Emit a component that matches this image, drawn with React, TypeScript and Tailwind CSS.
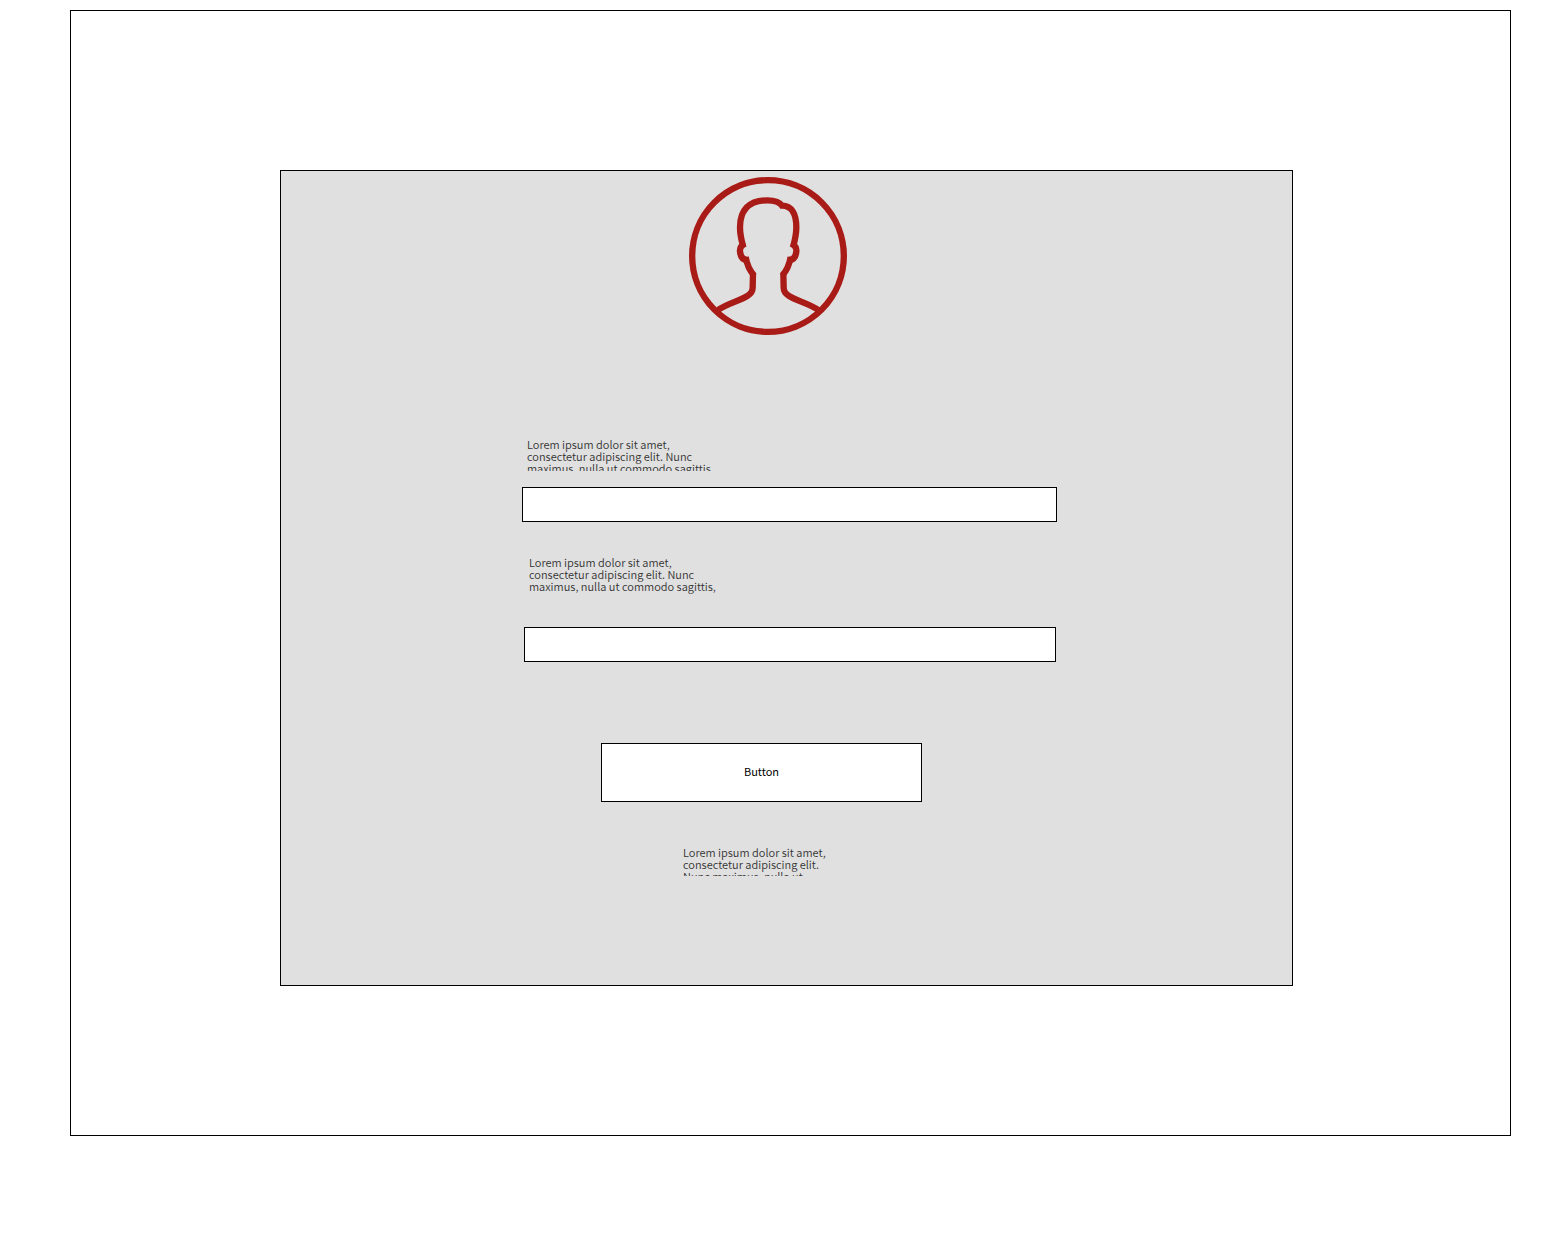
function Avatar() {
  return (
    <svg
      viewBox="27 36 474 474"
      className="size-[158px]"
      fill="none"
      stroke="#a91b16"
      strokeWidth={19}
      role="img"
      aria-label="User avatar"
    >
      <circle cx="264" cy="273" r="227.5" />
      <path d="M189 243C184 225 180 208 180 187C180 135 207 106 262 106C284 106 299 111 306 122C335 122 349 147 349 187C349 208 345 225 340 243" />
      <path d="M196 236C184 241 179 249 180 259C181 273 186 284 201 285" />
      <path d="M333 236C345 241 350 249 349 259C348 273 343 284 328 285" />
      <path d="M197 276C201 300 210 318 222 331" />
      <path d="M332 276C328 300 319 318 307 331" />
      <path d="M219 324L218 368C218 402 155 406 114 435" />
      <path d="M310 324L311 368C311 402 374 406 415 435" />
    </svg>
  );
}

const labelText = "block overflow-hidden text-[11px] leading-3 font-[350] text-[#333333]";
const fieldBox = "block h-[35px] w-full border border-black bg-white px-2 text-[11px] outline-none";

export default function App() {
  return (
    <div className="min-h-screen bg-white pt-[10px] pr-[49px] pb-[110px] pl-[70px] font-['Noto_Sans_CJK_SC',sans-serif]">
      <main className="border border-black pt-[159px] pr-[217px] pb-[149px] pl-[209px]">
        <form className="border border-black bg-[#e0e0e0] pt-[6px] pb-[109px]">
          <div className="flex justify-center pr-[37px]">
            <Avatar />
          </div>

          <div className="mt-[103px] pr-[235px] pl-[241px]">
            <label htmlFor="first" className={`${labelText} ml-[5px] h-[33px] w-[190px]`}>
              Lorem ipsum dolor sit amet, consectetur adipiscing elit. Nunc maximus, nulla ut commodo sagittis,
            </label>
            <input id="first" type="text" className={`${fieldBox} mt-4`} />
          </div>

          <div className="mt-[34px] pr-[236px] pl-[243px]">
            <label htmlFor="second" className={`${labelText} ml-[5px] h-10 w-[190px]`}>
              Lorem ipsum dolor sit amet, consectetur adipiscing elit. Nunc maximus, nulla ut commodo sagittis,
            </label>
            <input id="second" type="text" className={`${fieldBox} mt-[31px]`} />
          </div>

          <div className="mt-[81px] flex justify-center pr-[50px]">
            <button type="button" className="h-[59px] w-[321px] border border-black bg-white pb-1 text-[11px] leading-3 text-black">
              Button
            </button>
          </div>

          <div className="mt-11 flex justify-center pr-[57px]">
            <p className={`${labelText} h-[30px] w-[150px]`}>
              Lorem ipsum dolor sit amet, consectetur adipiscing elit. Nunc maximus, nulla ut
            </p>
          </div>
        </form>
      </main>
    </div>
  );
}
